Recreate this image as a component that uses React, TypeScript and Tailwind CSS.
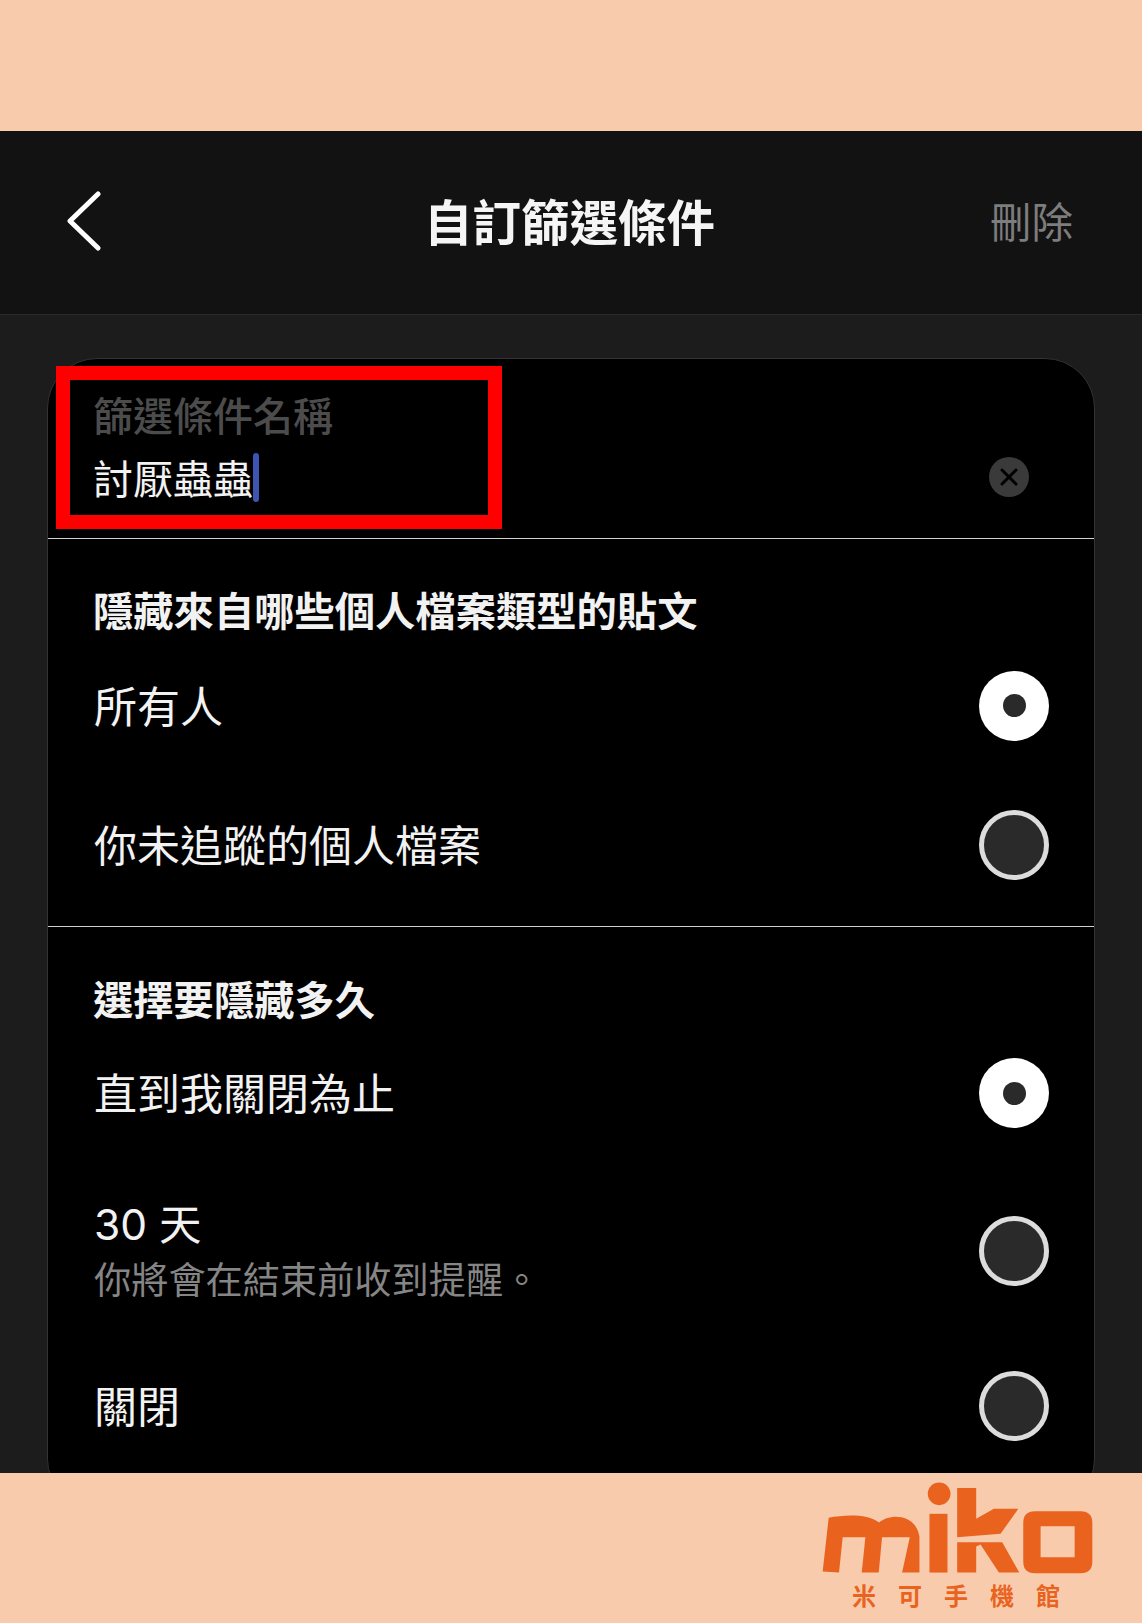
import React from 'react';

const FONT = "font-['Noto_Sans_CJK_TC','Noto_Sans',sans-serif]";

// Radio drawn with plain css, the reference has a thick white ring when selected
const Radio = ({ on }: { on?: boolean }) =>
  on ? (
    <div className="w-[70px] h-[70px] rounded-full bg-white flex items-center justify-center flex-shrink-0">
      <div className="w-[23px] h-[23px] rounded-full bg-[#2a2a2a]" />
    </div>
  ) : (
    <div className="w-[70px] h-[70px] rounded-full bg-[#2a2a2a] border-[5px] border-[#dcdcdc] flex-shrink-0" />
  );

const Row = ({ label, on, h }: { label: string; on?: boolean; h: string }) => (
  <div className={`flex items-center justify-between pl-[46px] pr-[45px] ${h}`}>
    <div className="text-[43px] leading-[50px] pb-[4px] text-[#f2f2f2]">{label}</div>
    <Radio on={on} />
  </div>
);

const MikoLogo = () => (
  <svg viewBox="125 125 815 275" className="w-[272px] h-[92px] block" fill="#e9631f">
    <path d="M127 393 L145 232 C195 222 262 220 296 246 C325 220 405 216 417 288 L417 396 L365 396 L388 290 L305 290 L295 396 L244 396 L255 290 L187 290 L176 396 Z" />
    <circle cx="476" cy="160" r="34" />
    <rect x="447" y="220" width="54" height="176" />
    <path d="M530 143 H587 V235 L640 205 H713 L660 280 L530 290 Z" />
    <path d="M530 305 H665 L716 396 H655 L600 312 L587 318 V396 H530 Z" />
    <path
      fillRule="evenodd"
      d="M763 212 H900 Q935 212 935 247 V363 Q935 398 900 398 H763 Q728 398 728 363 V247 Q728 212 763 212 Z M780 257 V350 H882 V257 Z"
    />
  </svg>
);

export default function App() {
  return (
    <div className={`w-[1142px] h-[1623px] flex flex-col overflow-hidden bg-[#f8cbad] ${FONT}`}>
      <div className="h-[131px] flex-shrink-0 bg-[#f8cbad]" />

      <div className="h-[1342px] flex-shrink-0 flex flex-col overflow-hidden bg-[#1c1c1c]">
        {/* header */}
        <div className="h-[184px] flex-shrink-0 bg-[#121212] border-b border-[#2a2a2a] grid grid-cols-[1fr_auto_1fr] items-center pl-[66px] pr-[69px]">
          <svg width="36" height="60" viewBox="0 0 36 60" fill="none" stroke="#ffffff" strokeWidth="5" strokeLinecap="round" strokeLinejoin="round" className="mb-[3px]">
            <path d="M32 3 L4 30 L32 57" />
          </svg>
          <div className="text-[48.5px] leading-[60px] mb-[6px] font-bold text-[#f5f5f5]">自訂篩選條件</div>
          <div className="text-[41.5px] leading-[60px] mb-[6px] text-right text-[#7d7d7d]">刪除</div>
        </div>

        {/* card */}
        <div className="flex-1 min-h-0 px-[47px] pt-[43px]">
          <div className="relative h-[1151px] bg-black rounded-[50px] border border-[#333333]">
            <div className="h-[180px] border-b border-[#d0d0d0] flex items-end justify-between pl-[45px] pr-[65px] pb-[36px]">
              <div>
                <div className="text-[40px] leading-[48px] text-[#4c4c4c] font-medium mb-[14px]">篩選條件名稱</div>
                <div className="flex items-center h-[50px] text-[40px] leading-[50px] text-[#f2f2f2]">
                  討厭蟲蟲
                  <span className="inline-block w-[6px] h-[49px] rounded-full bg-[#3b55b0]" />
                </div>
              </div>
              <div className="w-[40px] h-[40px] mb-[5px] rounded-full bg-[#3a3a3a] flex items-center justify-center">
                <svg width="18" height="18" viewBox="0 0 18 18" stroke="#000000" strokeWidth="3" strokeLinecap="round">
                  <path d="M2 2 L16 16 M16 2 L2 16" />
                </svg>
              </div>
            </div>

            <div className="h-[388px] border-b border-[#d0d0d0] pt-[46px]">
              <div className="pl-[45px] mb-[3px] text-[40.3px] leading-[48px] font-bold text-[#f2f2f2]">隱藏來自哪些個人檔案類型的貼文</div>
              <Row label="所有人" on h="h-[139px]" />
              <Row label="你未追蹤的個人檔案" h="h-[139px]" />
            </div>

            <div className="pt-[47px]">
              <div className="pl-[45px] mb-[1px] text-[40.3px] leading-[48px] font-bold text-[#f2f2f2]">選擇要隱藏多久</div>
              <Row label="直到我關閉為止" on h="h-[140px]" />
              <div className="flex items-center justify-between pl-[46px] pr-[45px] h-[176px]">
                <div>
                  <div className="font-['Inter','Noto_Sans_CJK_TC',sans-serif] text-[42.5px] leading-[54px] text-[#f2f2f2]">30 天</div>
                  <div className="text-[37.2px] leading-[52px] text-[#858585]">你將會在結束前收到提醒。</div>
                </div>
                <Radio />
              </div>
              <Row label="關閉" h="h-[134px]" />
            </div>

            {/* red highlight box added over the screenshot */}
            <div className="absolute left-[8px] top-[7px] w-[446px] h-[163px] border-[14px] border-[#ff0000]" />
          </div>
        </div>
      </div>

      {/* footer logo */}
      <div className="flex-1 flex justify-end pr-[48px] pt-[9px]">
        <div className="flex flex-col items-center w-[272px]">
          <MikoLogo />
          <div className="mt-[8px] text-[24px] leading-[26px] font-bold text-[#e9631f] tracking-[22px] pl-[18px] whitespace-nowrap">米可手機館</div>
        </div>
      </div>
    </div>
  );
}
